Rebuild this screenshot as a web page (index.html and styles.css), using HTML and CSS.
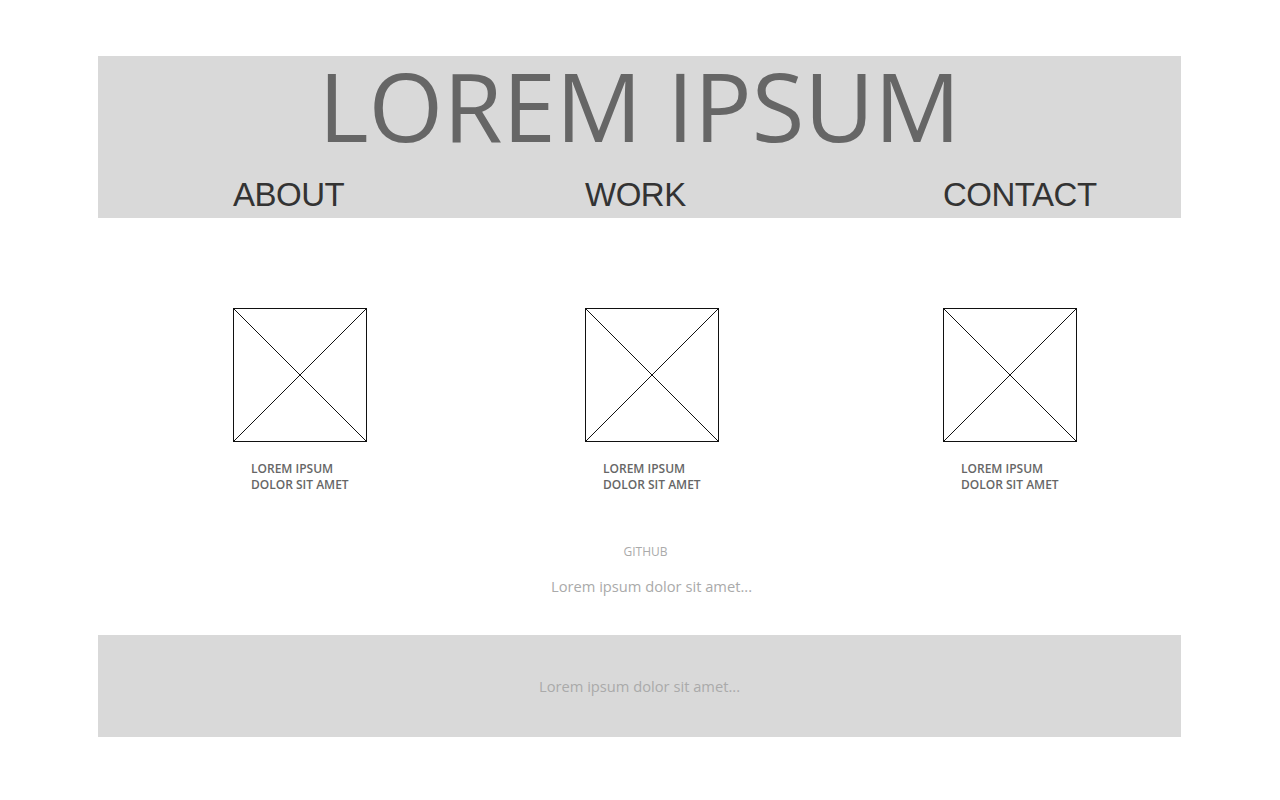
FILE: index.html
```html
<!DOCTYPE html>
<html>
<head>
<meta charset="utf-8">
<link rel="stylesheet" href="styles.css">
</head>
<body>
<div class="page">
  <header class="header">
    <h1 class="title">LOREM IPSUM</h1>
    <nav class="nav">
      <a class="nav-item">ABOUT</a>
      <a class="nav-item">WORK</a>
      <a class="nav-item">CONTACT</a>
    </nav>
  </header>
  <section class="gallery">
    <div class="card">
      <svg class="ph" width="134" height="134" viewBox="0 0 134 134"><rect x="0.5" y="0.5" width="133" height="133" fill="none" stroke="#111" stroke-width="1"/><line x1="0.5" y1="0.5" x2="133.5" y2="133.5" stroke="#111" stroke-width="1"/><line x1="133.5" y1="0.5" x2="0.5" y2="133.5" stroke="#111" stroke-width="1"/></svg>
      <p class="caption">LOREM IPSUM<br>DOLOR SIT AMET</p>
    </div>
    <div class="card">
      <svg class="ph" width="134" height="134" viewBox="0 0 134 134"><rect x="0.5" y="0.5" width="133" height="133" fill="none" stroke="#111" stroke-width="1"/><line x1="0.5" y1="0.5" x2="133.5" y2="133.5" stroke="#111" stroke-width="1"/><line x1="133.5" y1="0.5" x2="0.5" y2="133.5" stroke="#111" stroke-width="1"/></svg>
      <p class="caption">LOREM IPSUM<br>DOLOR SIT AMET</p>
    </div>
    <div class="card">
      <svg class="ph" width="134" height="134" viewBox="0 0 134 134"><rect x="0.5" y="0.5" width="133" height="133" fill="none" stroke="#111" stroke-width="1"/><line x1="0.5" y1="0.5" x2="133.5" y2="133.5" stroke="#111" stroke-width="1"/><line x1="133.5" y1="0.5" x2="0.5" y2="133.5" stroke="#111" stroke-width="1"/></svg>
      <p class="caption">LOREM IPSUM<br>DOLOR SIT AMET</p>
    </div>
  </section>
  <section class="info">
    <p class="github">GITHUB</p>
    <p class="blurb">Lorem ipsum dolor sit amet...</p>
  </section>
  <footer class="footer">
    <p class="footer-text">Lorem ipsum dolor sit amet...</p>
  </footer>
</div>
</body>
</html>
```
FILE: styles.css
```css
html, body {
  margin: 0;
  padding: 0;
  background: #fff;
}
body {
  font-family: "Open Sans", sans-serif;
}
.page {
  width: 1083px;
  margin: 0 0 0 98px;
  padding-top: 56px;
}
.header {
  background: #d9d9d9;
  height: 162px;
  display: flex;
  flex-direction: column;
}
.title {
  margin: 0;
  font-family: "Open Sans", sans-serif;
  font-weight: 400;
  font-size: 96px;
  line-height: 98px;
  color: #666;
  text-align: center;
  height: 119px;
}
.nav {
  display: grid;
  grid-template-columns: 352px 358px auto;
  padding-left: 135px;
}
.nav-item {
  font-family: "Liberation Sans", Arial, sans-serif;
  font-size: 33px;
  line-height: 40px;
  letter-spacing: -0.5px;
  color: #333;
}
.gallery {
  display: grid;
  grid-template-columns: 352px 358px auto;
  padding-left: 135px;
  padding-top: 90px;
}
.card {
  display: flex;
  flex-direction: column;
}
.ph {
  display: block;
}
.caption {
  margin: 19px 0 0 18px;
  font-size: 12px;
  line-height: 16px;
  font-weight: 600;
  color: #666;
}
.info {
  text-align: center;
  padding-top: 51px;
}
.github {
  margin: 0 0 0 12px;
  font-size: 12px;
  line-height: 16px;
  color: #aaa;
}
.blurb {
  margin: 15px 0 0 24px;
  font-size: 14.7px;
  line-height: 22px;
  color: #aaa;
}
.footer {
  margin-top: 38px;
  background: #d9d9d9;
  height: 102px;
  display: flex;
  align-items: center;
  justify-content: center;
}
.footer-text {
  margin: 0;
  font-size: 14.7px;
  line-height: 22px;
  color: #aaa;
}
```
